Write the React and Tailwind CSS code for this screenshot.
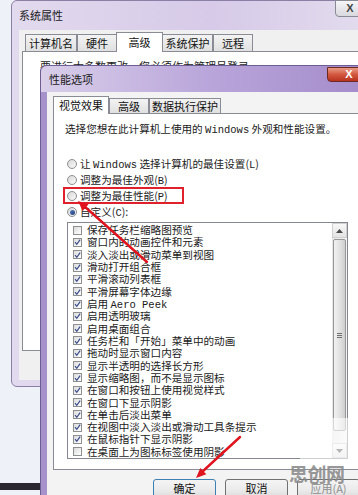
import React from 'react';

const cjk = "font-['Noto_Sans_CJK_SC','Noto_Sans',sans-serif]";

const options = [
  ['保存任务栏缩略图预览', false],
  ['窗口内的动画控件和元素', true],
  ['淡入淡出或滑动菜单到视图', true],
  ['滑动打开组合框', true],
  ['平滑滚动列表框', true],
  ['平滑屏幕字体边缘', true],
  ['启用 Aero Peek', true],
  ['启用透明玻璃', true],
  ['启用桌面组合', true],
  ['任务栏和「开始」菜单中的动画', true],
  ['拖动时显示窗口内容', true],
  ['显示半透明的选择长方形', true],
  ['显示缩略图，而不是显示图标', true],
  ['在窗口和按钮上使用视觉样式', true],
  ['在窗口下显示阴影', true],
  ['在单击后淡出菜单', true],
  ['在视图中淡入淡出或滑动工具条提示', true],
  ['在鼠标指针下显示阴影', true],
  ['在桌面上为图标标签使用阴影', false],
];

// latin words in the shot are drawn in a courier-like face
function Mixed({ text }) {
  const parts = text.split(/([A-Za-z]+(?: [A-Za-z]+)*)/);
  return parts.map((p, i) =>
    /[A-Za-z]/.test(p) ? (
      <span key={i} className="font-['Liberation_Mono',monospace] text-[10.5px]">{p}</span>
    ) : (
      <span key={i}>{p}</span>
    )
  );
}

function Check({ on }) {
  return (
    <span className="w-[9px] h-[9px] shrink-0 border border-[#8e8f8f] bg-gradient-to-br from-[#dcdcdc] to-[#ffffff] flex items-center justify-center">
      {on && (
        <svg width="8" height="8" viewBox="0 0 8 8">
          <path d="M1.2 4.2 L3.2 6.6 L7 1.2" fill="none" stroke="#3b4d8c" strokeWidth="1.4" />
        </svg>
      )}
    </span>
  );
}

function Radio({ on }) {
  return (
    <span className="w-[10px] h-[10px] shrink-0 rounded-full border border-[#8e8f8f] bg-gradient-to-br from-[#d8d8d8] to-[#fafafa] flex items-center justify-center">
      {on && <span className="w-[5px] h-[5px] rounded-full bg-gradient-to-br from-[#5a7fc0] to-[#1d3d78]" />}
    </span>
  );
}

function OuterTab({ label, w, selected }) {
  return selected ? (
    <div className={`h-[20px] -mb-px z-10 bg-white border border-b-0 border-[#898c95] flex items-center justify-center text-[11px] text-[#111] ${w}`}>
      {label}
    </div>
  ) : (
    <div className={`h-[17px] bg-gradient-to-b from-[#f3f3f3] to-[#e0e0e0] border border-b-0 border-[#898c95] flex items-center justify-center text-[11px] text-[#111] ${w}`}>
      {label}
    </div>
  );
}

function Button({ label, def, disabled }) {
  return (
    <div
      className={`w-[63px] h-[22px] rounded-[3px] border ${def ? 'border-[#3c7fb1]' : 'border-[#707070]'} bg-gradient-to-b from-[#f4f4f4] via-[#ebebeb] to-[#d6d6d6] flex items-start justify-center pt-[1px] leading-[14px] text-[11px] ${disabled ? 'text-[#8d8d8d]' : 'text-[#111]'}`}
    >
      {label}
    </div>
  );
}

export default function App() {
  return (
    <div className={`relative w-[358px] h-[495px] overflow-hidden bg-[#eef1f7] ${cjk}`}>
      {/* desktop strip at the bottom left */}
      <div className="absolute left-0 top-[483px] w-[40px] h-[7px] bg-[#2a2630]" />

      {/* 系统属性 */}
      <div className="absolute left-[11px] top-0 w-[400px] h-[387px] rounded-[6px] border border-[#8b7fa6] bg-gradient-to-r from-[#e2daee] via-[#d6cae8] to-[#e6e0ef] flex flex-col">
        <div className="h-[29px] flex items-center pl-[7px] text-[11px] text-[#1a1a1a]">系统属性</div>
        <div className="absolute left-[323px] -top-px w-[30px] h-[17px] rounded-b-[4px] border border-[#8a8a95] bg-gradient-to-b from-[#f6f6f8] to-[#d8d8de] flex items-center justify-center">
          <span className="text-[11px] leading-none text-[#444] font-['Liberation_Sans',sans-serif] font-bold">X</span>
        </div>
        <div className="flex-1 mx-[7px] mb-[6px] bg-[#f0f0f0] flex flex-col pl-[3px]">
          <div className="h-[21px] flex items-end pl-[3px]">
            <OuterTab label="计算机名" w="w-[52px]" />
            <OuterTab label="硬件" w="w-[40px]" />
            <OuterTab label="高级" w="w-[47px] -mx-[1px]" selected />
            <OuterTab label="系统保护" w="w-[51px]" />
            <OuterTab label="远程" w="w-[40px]" />
          </div>
          <div className="h-[300px] bg-white border border-[#898c95] pl-[17px] pt-[6px] text-[11px] text-[#1a1a1a]">
            要进行大多数更改，您必须作为管理员登录。
          </div>
        </div>
      </div>

      {/* 性能选项 */}
      <div className="absolute left-[40px] top-[65px] w-[340px] h-[450px] rounded-t-[6px] border border-[#6e5d92] bg-[#a793cb] flex flex-col">
        <div className="h-[26px] rounded-t-[6px] bg-gradient-to-r from-[#d9cfe9] via-[#b9a5da] to-[#a28ac9] flex items-center pl-[8px] text-[11px] text-[#1a1a1a]">
          性能选项
        </div>
        <div className="absolute left-[286px] top-[1px] w-[44px] h-[15px] rounded-b-[4px] border border-[#6b2a22] bg-gradient-to-b from-[#e89b86] via-[#d2573f] to-[#b8321f] flex items-center justify-center">
          <span className="text-[11px] leading-none text-white font-['Liberation_Sans',sans-serif] font-bold">X</span>
        </div>
        <div className="flex-1 ml-[6px] bg-[#f3f3f3] flex flex-col pl-[6px]">
          <div className="h-[21px] flex items-end">
            <div className="w-[56px] h-[18px] -mb-px z-10 bg-white border border-b-0 border-[#898c95] flex items-center justify-center text-[11px] text-[#111]">视觉效果</div>
            <div className="w-[40px] h-[15px] bg-gradient-to-b from-[#f3f3f3] to-[#e0e0e0] border border-b-0 border-[#898c95] flex items-center justify-center text-[11px] text-[#111]">高级</div>
            <div className="w-[72px] h-[15px] bg-gradient-to-b from-[#f3f3f3] to-[#e0e0e0] border border-b-0 border-[#898c95] flex items-center justify-center text-[11px] text-[#111]">数据执行保护</div>
          </div>
          <div className="h-[357px] bg-white border border-[#898c95] flex flex-col text-[10.6px] text-[#1a1a1a]">
            <div className="mt-[8px] ml-[11px] h-[14px] leading-[14px]">
              <Mixed text="选择您想在此计算机上使用的 Windows 外观和性能设置。" />
            </div>
            <div className="mt-[20px] ml-[13px] flex flex-col">
              {[
                ['让 Windows 选择计算机的最佳设置(L)', false],
                ['调整为最佳外观(B)', false],
                ['调整为最佳性能(P)', false],
                ['自定义(C):', true],
              ].map(([t, on]) => (
                <div key={t} className="h-[16px] flex items-center gap-[3px] leading-[16px]">
                  <Radio on={on} />
                  <span><Mixed text={t} /></span>
                </div>
              ))}
            </div>
            <div className="mt-[2px] ml-[13px] w-[281px] h-[237px] border border-[#828790] bg-white flex">
              <div className="flex-1 pt-[1px] pl-[5px] flex flex-col">
                {options.map(([t, on]) => (
                  <div key={t} className="h-[12.33px] flex items-center gap-[5px] leading-[12px] whitespace-nowrap">
                    <Check on={on} />
                    <span><Mixed text={t} /></span>
                  </div>
                ))}
              </div>
              <div className="w-[15px] bg-gradient-to-r from-[#e6e6e6] to-[#f4f4f4] flex flex-col">
                <div className="h-[15px] border border-[#d0d0d0] bg-gradient-to-b from-[#f7f7f7] to-[#e4e4e4] flex items-center justify-center">
                  <svg width="7" height="4" viewBox="0 0 7 4"><path d="M0 4 L3.5 0 L7 4 Z" fill="#4a4a4a" /></svg>
                </div>
                <div className="h-[192px] mx-[1px] mt-[1px] rounded-[2px] border border-[#979797] bg-gradient-to-r from-[#f2f2f2] via-[#e2e2e2] to-[#cfcfcf] flex flex-col items-center justify-center gap-[1px]">
                  <span className="w-[5px] h-px bg-[#6f6f6f]" />
                  <span className="w-[5px] h-px bg-[#6f6f6f]" />
                  <span className="w-[5px] h-px bg-[#6f6f6f]" />
                </div>
                <div className="flex-1" />
                <div className="h-[15px] border border-[#d0d0d0] bg-gradient-to-b from-[#f7f7f7] to-[#e4e4e4] flex items-center justify-center">
                  <svg width="7" height="4" viewBox="0 0 7 4"><path d="M0 0 L3.5 4 L7 0 Z" fill="#4a4a4a" /></svg>
                </div>
              </div>
            </div>
          </div>
          <div className="mt-[9px] ml-[100px] flex gap-[9px]">
            <Button label="确定" def />
            <Button label="取消" />
            <Button label="应用(A)" disabled />
          </div>
        </div>
      </div>

      {/* red highlight box */}
      <div className="absolute left-[63px] top-[187px] w-[121px] h-[17px] border-2 border-[#e0202a]" />

      {/* watermark */}
      <div className="absolute left-[300px] top-[418px] w-[58px] h-[46px] bg-white/60 rounded-[3px]" />
      <div className="absolute left-[289px] top-[461px] text-[19px] leading-[26px] font-bold text-[#8a8a8a]/90 tracking-[-0.5px]">思创网</div>

      {/* red arrows */}
      <svg className="absolute inset-0 pointer-events-none" width="358" height="495" viewBox="0 0 358 495">
        <line x1="147" y1="262" x2="84" y2="206" stroke="#e0141e" strokeWidth="2.4" strokeLinecap="round" />
        <polygon points="78,201 88.5,204.3 82.6,211" fill="#e0141e" />
        <line x1="240" y1="437" x2="202" y2="472" stroke="#e0141e" strokeWidth="2.4" strokeLinecap="round" />
        <polygon points="196,478 206.3,474.3 200.3,468" fill="#e0141e" />
      </svg>
    </div>
  );
}
